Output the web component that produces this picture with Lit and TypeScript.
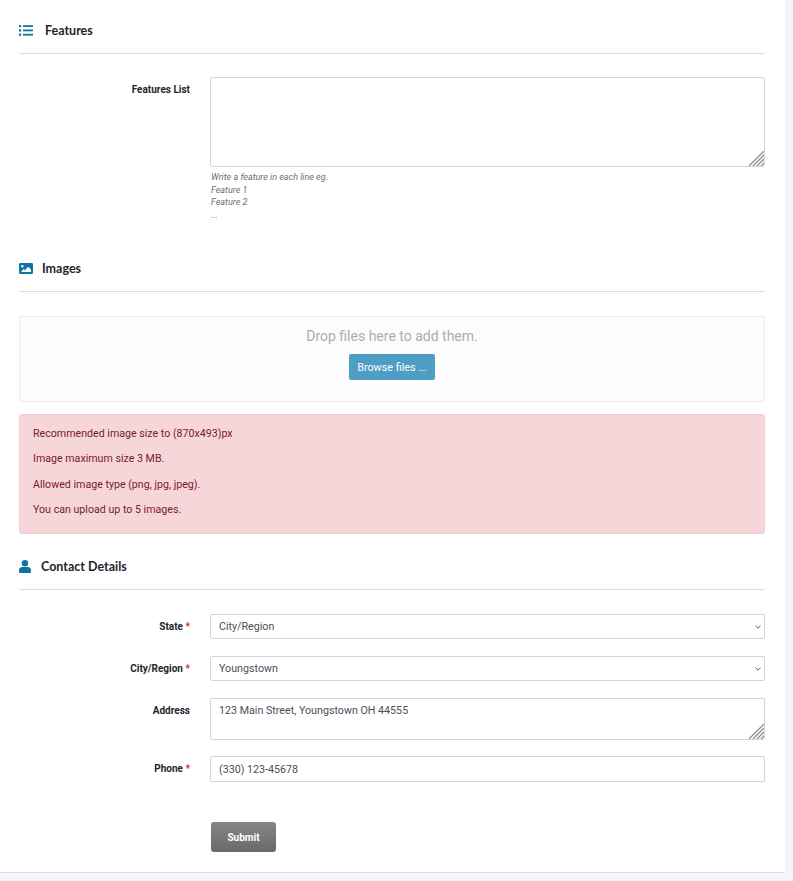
import { LitElement, html, css, svg } from "lit";
import { customElement } from "lit/decorators.js";

const grip = html`<svg class="grip" viewBox="0 0 15 15">
  ${svg`<path d="M0 15L15 0M4 15L15 4M8 15L15 8M12 15L15 12" />`}
</svg>`;

@customElement("app-root")
export class AppRoot extends LitElement {
  static styles = css`
    :host { display: block; height: 881px; background: #f4f5fa; font-family: Roboto, "Liberation Sans", sans-serif; color: #3b3f45; overflow: hidden; }
    * { box-sizing: border-box; }
    .card { width: 785px; height: 873px; background: #fff; border-bottom: 1px solid #dcdde3; padding: 18px 20px 0 19px; }
    .head { display: flex; align-items: center; height: 24px; font-family: Lato, "Open Sans", sans-serif; font-weight: 700; font-size: 12.5px; color: #22262b; }
    .head svg { display: block; flex: none; fill: #0f75a1; }
    .rule { height: 1px; background: #dcdde0; margin-top: 11px; }
    .row { display: grid; grid-template-columns: 171px 555px; column-gap: 20px; }
    .lab { text-align: right; font-size: 10px; font-weight: 700; color: #23262b; line-height: 12px; }
    .req { color: #e0212f; }
    .ctl { width: 100%; display: block; margin: 0; border: 1px solid #d3d5d9; border-radius: 2px; background: #fff; font-family: Roboto, "Liberation Sans", sans-serif; font-size: 10.7px; color: #4a4f55; padding: 0 8px; outline: none; }
    textarea.ctl { padding: 5px 8px; line-height: 13px; resize: none; }
    .ta { position: relative; }
    .grip { position: absolute; right: 1px; bottom: 1px; width: 15px; height: 15px; fill: none; stroke: #8f8f8f; stroke-width: 1.3; pointer-events: none; }
    .features { margin-top: 23px; }
    .features .lab { padding-top: 7px; }
    .features textarea { height: 90px; }
    .help { margin-top: 4px; padding-left: 1px; font-size: 9px; line-height: 12.6px; font-style: italic; color: #6b6f75; }
    .h2 { margin-top: 35px; }
    .drop { margin-top: 24px; height: 86px; border: 1px solid #eeeeee; background: #fcfcfc; display: flex; flex-direction: column; align-items: center; padding-top: 10px; }
    .drop-t { font-size: 14px; line-height: 18px; color: #acacac; }
    .browse { margin-top: 9px; height: 26px; width: 86px; border: 0; border-radius: 2px; background: #4e9dc4; color: #fff; font-family: Roboto, "Liberation Sans", sans-serif; font-size: 10.8px; padding: 0; }
    .alert { margin-top: 12px; height: 120px; background: #f7d6da; border: 1px solid #f3c8cd; border-radius: 3px; padding: 12px 13px 0; font-size: 10.65px; line-height: 13px; color: #7a1a26; display: flex; flex-direction: column; gap: 12.1px; }
    .h3 { margin-top: 20px; }
    .contact { margin-top: 24px; display: flex; flex-direction: column; }
    .sel-wrap { position: relative; }
    select.ctl { height: 25px; appearance: none; -webkit-appearance: none; padding: 0 8px; }
    .chev { position: absolute; right: 4px; top: 11px; width: 6px; height: 4px; fill: none; stroke: #5f646a; stroke-width: 1; pointer-events: none; }
    .contact .lab { padding-top: 7px; }
    .gap17 { margin-top: 17px; }
    .addr textarea { height: 42px; }
    .addr .lab { padding-top: 7px; }
    .phone { margin-top: 16px; }
    input.ctl { height: 26px; }
    .sub { margin-top: 40px; display: grid; grid-template-columns: 172px 65px; column-gap: 20px; }
    .submit { grid-column: 2; height: 30px; border: 0; border-radius: 3px; padding: 0; background: linear-gradient(#858585, #6a6a6a); color: #fff; font-family: Roboto, "Liberation Sans", sans-serif; font-weight: 700; font-size: 10px; }
  `;

  render() {
    return html`
      <div class="card">
        <div class="head">
          <svg width="14" height="11" viewBox="0 0 14 11" style="margin-right:12px">
            <rect x="0" y="0" width="2.2" height="2.2" /><rect x="0" y="4.3" width="2.2" height="2.2" /><rect x="0" y="8.6" width="2.2" height="2.2" />
            <rect x="4" y="0.2" width="10" height="1.8" /><rect x="4" y="4.5" width="10" height="1.8" /><rect x="4" y="8.8" width="10" height="1.8" />
          </svg>
          Features
        </div>
        <div class="rule"></div>
        <div class="row features">
          <div class="lab">Features List</div>
          <div>
            <div class="ta"><textarea class="ctl"></textarea>${grip}</div>
            <div class="help">Write a feature in each line eg.<br />Feature 1<br />Feature 2<br />...</div>
          </div>
        </div>

        <div class="head h2">
          <svg width="14" height="11" viewBox="0 0 14 11" style="margin-right:9px">
            <path fill-rule="evenodd" d="M1.2 0h11.6A1.2 1.2 0 0 1 14 1.2v8.6a1.2 1.2 0 0 1-1.2 1.2H1.2A1.2 1.2 0 0 1 0 9.800V1.200A1.200 1.200 0 0 1 1.200 0ZM3.300 2a1.300 1.300 0 1 0 0 2.600a1.300 1.300 0 0 0 0-2.600ZM2 9h10V6.500L9.200 3.800L5.800 7.200L4.500 5.900Z" />
          </svg>
          Images
        </div>
        <div class="rule"></div>
        <div class="drop">
          <div class="drop-t">Drop files here to add them.</div>
          <button class="browse">Browse files ...</button>
        </div>
        <div class="alert">
          <div>Recommended image size to (870x493)px</div>
          <div>Image maximum size 3 MB.</div>
          <div>Allowed image type (png, jpg, jpeg).</div>
          <div>You can upload up to 5 images.</div>
        </div>

        <div class="head h3">
          <svg width="12" height="13" viewBox="0 0 12 13" style="margin-right:10px">
            <circle cx="6" cy="3.200" r="3.200" /><path d="M3.500 7h5A3.500 3.500 0 0 1 12 10.500V12a1 1 0 0 1-1 1H1a1 1 0 0 1-1-1V10.500A3.500 3.500 0 0 1 3.500 7Z" />
          </svg>
          Contact Details
        </div>
        <div class="rule"></div>
        <div class="contact">
          <div class="row">
            <div class="lab">State <span class="req">*</span></div>
            <div class="sel-wrap">
              <select class="ctl"><option>City/Region</option></select>
              <svg class="chev" viewBox="0 0 6 4"><path d="M0.400 0.500L3 3.200L5.600 0.500" /></svg>
            </div>
          </div>
          <div class="row gap17">
            <div class="lab">City/Region <span class="req">*</span></div>
            <div class="sel-wrap">
              <select class="ctl"><option>Youngstown</option></select>
              <svg class="chev" viewBox="0 0 6 4"><path d="M0.400 0.500L3 3.200L5.600 0.500" /></svg>
            </div>
          </div>
          <div class="row gap17 addr">
            <div class="lab">Address</div>
            <div class="ta"><textarea class="ctl">123 Main Street, Youngstown OH 44555</textarea>${grip}</div>
          </div>
          <div class="row phone">
            <div class="lab">Phone <span class="req">*</span></div>
            <input class="ctl" value="(330) 123-45678" />
          </div>
        </div>
        <div class="sub"><button class="submit">Submit</button></div>
      </div>
    `;
  }
}
